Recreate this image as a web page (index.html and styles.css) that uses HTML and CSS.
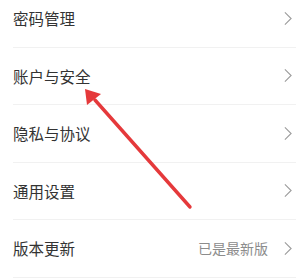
FILE: index.html
```html
<!DOCTYPE html>
<html lang="zh-CN">
<head>
    <meta charset="UTF-8">
    <meta name="viewport" content="width=device-width, initial-scale=1.0">
    <title>设置</title>
    <link rel="stylesheet" href="styles.css">
</head>
<body>

<!-- settings list -->
<div class="page">
    <ul class="menu">
        <li class="row"><span class="label">密码管理</span><svg class="chev" viewBox="0 0 9 16"><polyline points="1,1 8,8 1,15"/></svg></li>
        <li class="row"><span class="label">账户与安全</span><svg class="chev" viewBox="0 0 9 16"><polyline points="1,1 8,8 1,15"/></svg></li>
        <li class="row"><span class="label">隐私与协议</span><svg class="chev" viewBox="0 0 9 16"><polyline points="1,1 8,8 1,15"/></svg></li>
        <li class="row"><span class="label">通用设置</span><svg class="chev" viewBox="0 0 9 16"><polyline points="1,1 8,8 1,15"/></svg></li>
        <li class="row"><span class="label">版本更新</span><span class="note">已是最新版</span><svg class="chev" viewBox="0 0 9 16"><polyline points="1,1 8,8 1,15"/></svg></li>
    </ul>

    <!-- red pointer over the list -->
    <svg class="pointer" width="305" height="280" viewBox="0 0 305 280">
        <line x1="190" y1="207" x2="95" y2="100" stroke="#e5393b" stroke-width="3.4" stroke-linecap="round"/>
        <polygon points="85,89 87,105 101,94" fill="#e5393b"/>
    </svg>
</div>

</body>
</html>
```

FILE: styles.css
```css
body {
    margin: 0;
    background-color: #fff;
    font-family: "Noto Sans CJK SC", "Noto Sans", sans-serif;
    overflow: hidden;
}

.page {
    position: relative;
    width: 305px;
    height: 280px;
    overflow: hidden;
}

.menu {
    list-style: none;
    margin: -10px 9px 0 13px;
    padding: 0;
}

.row {
    display: flex;
    align-items: center;
    height: 57.5px;
    box-sizing: border-box;
    padding-right: 4px;
    border-bottom: 1px solid #f1f1f1;
}

.label {
    flex: 1;
    font-size: 15.5px;
    color: #333;
}

.note {
    font-size: 14px;
    color: #8c8c8c;
    margin-right: 16px;
}

.chev {
    width: 8px;
    height: 15px;
    fill: none;
    stroke: #9a9a9a;
    stroke-width: 1.2;
}

.pointer {
    position: absolute;
    left: 0;
    top: 0;
}
```
